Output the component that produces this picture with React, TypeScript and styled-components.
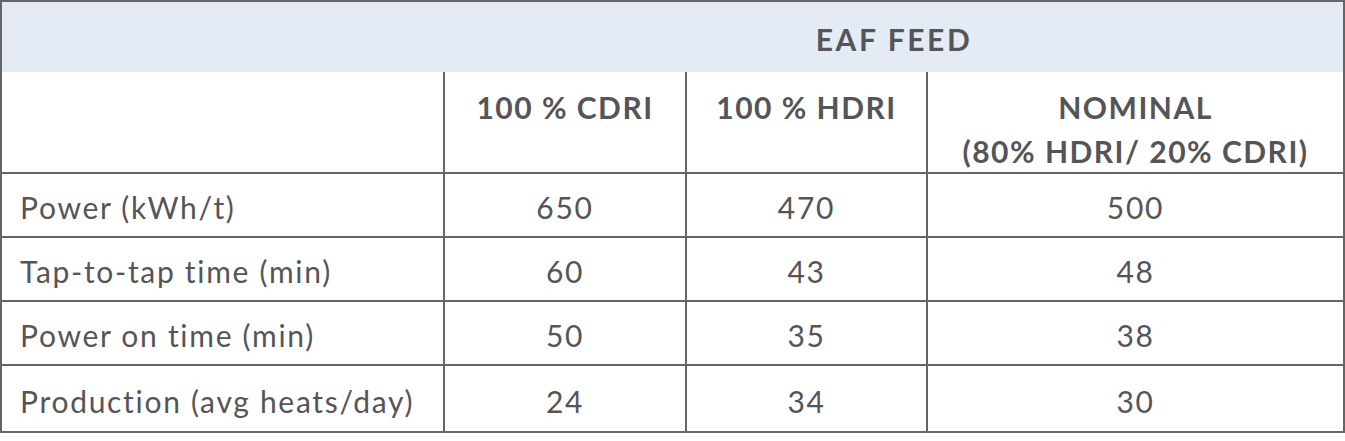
import React from "react";
import styled, { createGlobalStyle } from "styled-components";

const Global = createGlobalStyle`
  html, body { margin: 0; padding: 0; background: #ffffff; }
  body {
    font-family: Lato, "Open Sans", Arial, sans-serif;
    color: #555557;
    font-variant-ligatures: none;
  }
`;

const COLS = "441px 240px 239px 415px";

const Table = styled.div`
  width: 1345px;
  box-sizing: border-box;
  border: 2px solid #666666;
  background: #ffffff;
`;

const HeaderBar = styled.div`
  display: grid;
  grid-template-columns: ${COLS};
  column-gap: 2px;
  height: 70px;
  background: #e4ebf4;
`;

const GroupTitle = styled.div`
  grid-column: 2 / 5;
  display: flex;
  align-items: center;
  justify-content: center;
  padding-top: 4px;
  font-size: 30px;
  font-weight: 700;
  letter-spacing: 2.6px;
  color: #555557;
`;

const Body = styled.div`
  display: grid;
  grid-template-columns: ${COLS};
  grid-template-rows: 100px 62px 62px 62px 65px;
  gap: 2px;
  background: #666666;
`;

const Cell = styled.div<{ $align?: "left" | "center" }>`
  background: #ffffff;
  display: flex;
  align-items: center;
  justify-content: ${(p) => (p.$align === "left" ? "flex-start" : "center")};
  padding: 4px 0 0 ${(p) => (p.$align === "left" ? "18px" : "0")};
  font-size: 30px;
  font-weight: 400;
  letter-spacing: 1.7px;
  color: #555557;
  white-space: nowrap;
`;

const ColHead = styled.div`
  background: #ffffff;
  display: flex;
  flex-direction: column;
  align-items: center;
  justify-content: flex-start;
  padding-top: 13px;
  font-size: 30px;
  line-height: 44px;
  font-weight: 700;
  letter-spacing: 1.5px;
  color: #555557;
  text-align: center;
  white-space: nowrap;
`;

const rows: [string, string, string, string][] = [
  ["Power (kWh/t)", "650", "470", "500"],
  ["Tap-to-tap time (min)", "60", "43", "48"],
  ["Power on time (min)", "50", "35", "38"],
  ["Production (avg heats/day)", "24", "34", "30"],
];

export default function App() {
  return (
    <>
      <Global />
      <Table>
        <HeaderBar>
          <GroupTitle>EAF FEED</GroupTitle>
        </HeaderBar>
        <Body>
          <ColHead />
          <ColHead>100 % CDRI</ColHead>
          <ColHead>100 % HDRI</ColHead>
          <ColHead>
            <span>NOMINAL</span>
            <span>(80% HDRI/ 20% CDRI)</span>
          </ColHead>
          {rows.map((r) => (
            <React.Fragment key={r[0]}>
              <Cell $align="left">{r[0]}</Cell>
              <Cell>{r[1]}</Cell>
              <Cell>{r[2]}</Cell>
              <Cell>{r[3]}</Cell>
            </React.Fragment>
          ))}
        </Body>
      </Table>
    </>
  );
}
